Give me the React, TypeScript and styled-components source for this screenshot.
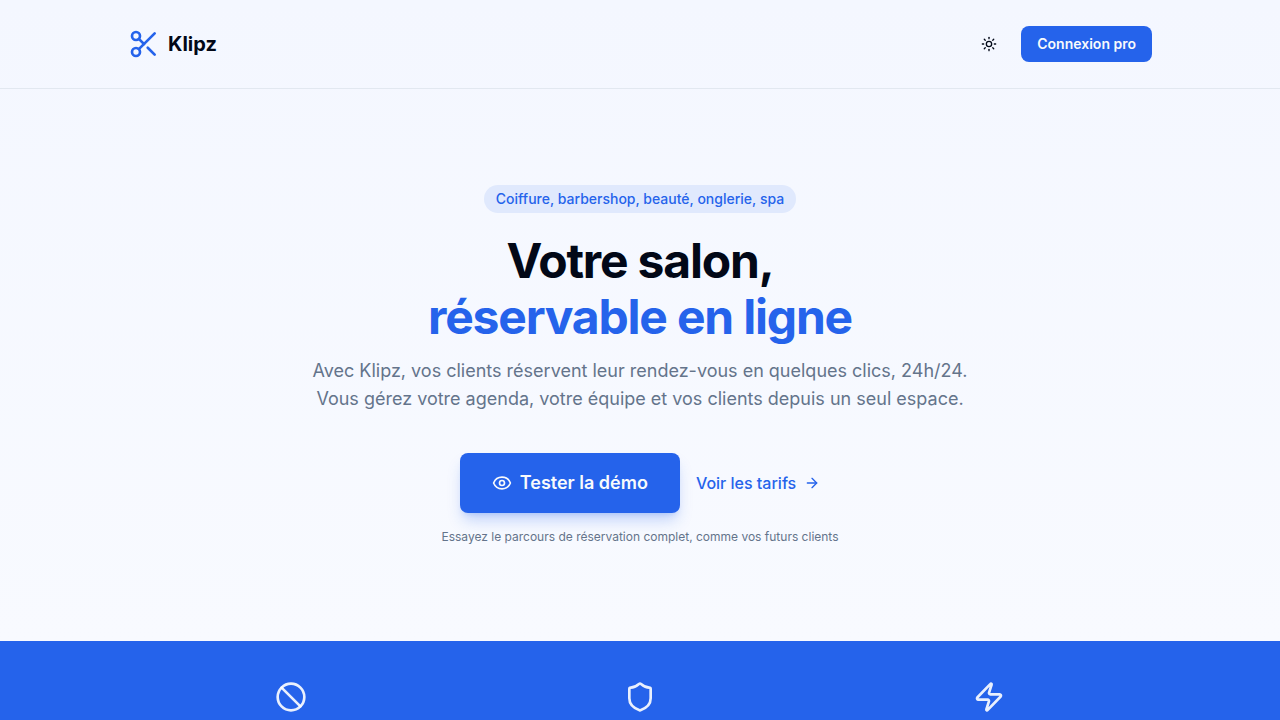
import React from "react";
import styled, { createGlobalStyle } from "styled-components";
import { Scissors, Sun, Eye, ArrowRight, Ban, Shield, Zap } from "lucide-react";

const GlobalStyle = createGlobalStyle`
  *, *::before, *::after { box-sizing: border-box; }
  body {
    margin: 0;
    font-family: Inter, sans-serif;
    font-size: 16px;
    line-height: 24px;
    color: #020817;
    background: #ffffff;
  }
`;

const Page = styled.div`
  background: linear-gradient(180deg, #f4f7ff 0%, #f8faff 100%);
`;

const Header = styled.header`
  border-bottom: 1px solid #e2e8f0;
`;

const HeaderInner = styled.div`
  display: flex;
  align-items: center;
  justify-content: space-between;
  max-width: 1088px;
  margin: 0 auto;
  padding: 24px 32px;
`;

const Brand = styled.a`
  display: flex;
  align-items: center;
  gap: 8px;
  height: 40px;
  font-size: 20px;
  line-height: 28px;
  font-weight: 700;
  color: inherit;
  text-decoration: none;

  svg { color: #2563eb; }
`;

const Actions = styled.div`
  display: flex;
  align-items: center;
  gap: 16px;
`;

const IconButton = styled.button`
  display: flex;
  align-items: center;
  justify-content: center;
  width: 32px;
  height: 32px;
  padding: 0;
  border: 0;
  border-radius: 6px;
  background: transparent;
  color: inherit;
  cursor: pointer;
`;

const PrimaryButton = styled.button<{ $large?: boolean }>`
  display: inline-flex;
  align-items: center;
  justify-content: center;
  gap: 8px;
  height: ${(p) => (p.$large ? 60 : 36)}px;
  padding: 0 ${(p) => (p.$large ? 32 : 16)}px;
  border: 0;
  border-radius: 8px;
  background: #2563eb;
  color: #f8fafc;
  font-family: inherit;
  font-size: ${(p) => (p.$large ? 18 : 14)}px;
  line-height: ${(p) => (p.$large ? 28 : 20)}px;
  font-weight: 600;
  cursor: pointer;
  box-shadow: ${(p) =>
    p.$large
      ? "0 10px 15px -3px rgba(37, 99, 235, 0.25), 0 4px 6px -4px rgba(37, 99, 235, 0.25)"
      : "none"};
`;

const Hero = styled.section`
  display: flex;
  flex-direction: column;
  align-items: center;
  padding: 96px 16px;
  text-align: center;
`;

const Tag = styled.span`
  padding: 4px 12px;
  border-radius: 14px;
  background: #e0e9fd;
  color: #2563eb;
  font-size: 14px;
  line-height: 20px;
  font-weight: 500;
`;

const Title = styled.h1`
  margin: 20px 0 12px;
  font-size: 48px;
  line-height: 56px;
  font-weight: 700;
  letter-spacing: -0.025em;
`;

const Accent = styled.span`
  display: block;
  color: #2563eb;
`;

const Lead = styled.p`
  max-width: 672px;
  margin: 0;
  font-size: 18px;
  line-height: 28px;
  color: #64748b;
`;

const Choices = styled.div`
  display: flex;
  align-items: center;
  gap: 16px;
  margin-top: 40px;
`;

const TextLink = styled.a`
  display: inline-flex;
  align-items: center;
  gap: 8px;
  color: #2563eb;
  font-weight: 500;
  text-decoration: none;
`;

const Note = styled.p`
  margin: 16px 0 0;
  font-size: 12px;
  line-height: 16px;
  color: #64748b;
`;

const Benefits = styled.section`
  background: #2563eb;
  color: #ffffff;
`;

const BenefitGrid = styled.ul`
  display: grid;
  grid-template-columns: repeat(3, 1fr);
  gap: 32px;
  max-width: 1080px;
  margin: 0 auto;
  padding: 40px 32px;
  list-style: none;
`;

const Benefit = styled.li`
  display: flex;
  justify-content: center;

  svg { color: rgba(255, 255, 255, 0.9); }
`;

export default function App() {
  return (
    <>
      <GlobalStyle />
      <Page>
        <Header>
          <HeaderInner>
            <Brand href="#">
              <Scissors size={32} />
              Klipz
            </Brand>
            <Actions>
              <IconButton type="button" aria-label="Changer de thème">
                <Sun size={16} />
              </IconButton>
              <PrimaryButton type="button">Connexion pro</PrimaryButton>
            </Actions>
          </HeaderInner>
        </Header>
        <Hero>
          <Tag>Coiffure, barbershop, beauté, onglerie, spa</Tag>
          <Title>
            Votre salon,
            <Accent>réservable en ligne</Accent>
          </Title>
          <Lead>
            Avec Klipz, vos clients réservent leur rendez-vous en quelques clics, 24h/24. Vous
            gérez votre agenda, votre équipe et vos clients depuis un seul espace.
          </Lead>
          <Choices>
            <PrimaryButton type="button" $large>
              <Eye size={20} />
              Tester la démo
            </PrimaryButton>
            <TextLink href="#tarifs">
              Voir les tarifs
              <ArrowRight size={16} />
            </TextLink>
          </Choices>
          <Note>Essayez le parcours de réservation complet, comme vos futurs clients</Note>
        </Hero>
      </Page>
      <Benefits>
        <BenefitGrid>
          <Benefit><Ban size={32} /></Benefit>
          <Benefit><Shield size={32} /></Benefit>
          <Benefit><Zap size={32} /></Benefit>
        </BenefitGrid>
      </Benefits>
    </>
  );
}
